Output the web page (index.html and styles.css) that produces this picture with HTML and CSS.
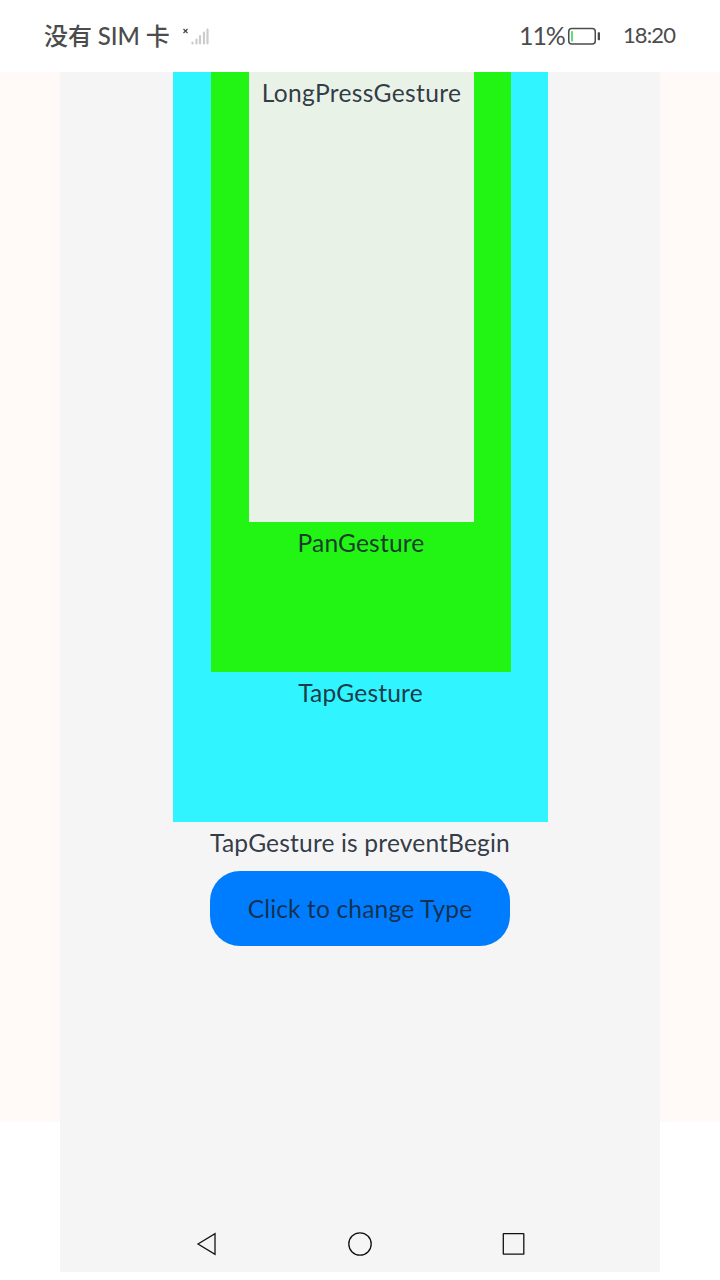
FILE: index.html
```html
<!DOCTYPE html>
<html lang="zh-CN">
<head>
<meta charset="utf-8">
<title>Gesture</title>
<link rel="stylesheet" href="styles.css">
</head>
<body>
<header class="status">
  <span class="sim">没有 SIM 卡</span>
  <svg class="signal" width="28" height="20" viewBox="0 0 28 20"><path d="M1.500 3l4 4M5.500 3l-4 4" stroke="#444" stroke-width="1.200"/><path d="M10.500 17.500v-1M14.500 17.500v-4M18 17.500v-7.500M22 17.500v-11M25.500 17.500v-14" stroke="#ccc" stroke-width="2.200" stroke-linecap="round"/></svg>
  <span class="percent">11%</span>
  <svg class="battery" width="33" height="18" viewBox="0 0 33 18"><rect x=".75" y="1.500" width="26.500" height="15.500" rx="3" fill="none" stroke="#4c4c4c" stroke-width="1.500"/><rect x="3" y="4" width="2" height="10.500" rx=".5" fill="#64dc78"/><rect x="29.700" y="5.200" width="2.300" height="8" rx=".6" fill="#4c4c4c"/></svg>
  <time class="time">18:20</time>
</header>
<div class="screen">
  <main class="page">
    <section class="tap">
      <section class="pan">
        <section class="press"><p class="label w-press">LongPressGesture</p></section>
        <p class="label">PanGesture</p>
      </section>
      <p class="label">TapGesture</p>
    </section>
    <p class="label">TapGesture is preventBegin</p>
    <button class="change">Click to change Type</button>
    <nav class="nav">
      <svg width="26" height="26" viewBox="0 0 26 26"><path d="M4 13L21 2.700v20.600z"/></svg>
      <svg width="26" height="26" viewBox="0 0 26 26"><circle cx="13" cy="13" r="11.200"/></svg>
      <svg width="26" height="26" viewBox="0 0 26 26"><rect x="2.300" y="2.700" width="20.500" height="20.500" rx=".3"/></svg>
    </nav>
  </main>
</div>
</body>
</html>
```
FILE: styles.css
```css
* { box-sizing: border-box; }
body { margin: 0; height: 1280px; background: #fff; overflow: hidden; font-family: Lato, "Noto Sans CJK SC", sans-serif; color: rgba(24, 36, 49, .9); }
.status { height: 72px; display: flex; align-items: center; padding: 0 44px; color: #4c4c4c; white-space: nowrap; }
.sim { font-size: 24px; font-weight: 500; width: 138px; letter-spacing: -.1px; padding-bottom: 4px; }
.percent { margin-left: auto; width: 49px; font-size: 25px; letter-spacing: -1.1px; padding-bottom: 3px; }
.battery { margin: 0 22px 0 0; }
.time { width: 54px; font-size: 22px; letter-spacing: -.9px; padding-bottom: 4px; margin-right: -1px; }
.screen { height: 1200px; padding: 0 60px; background: linear-gradient(#fffaf8 1050px, #fff 1050px); }
.page { height: 1200px; background: #f5f5f5; display: flex; flex-direction: column; align-items: center; }
.tap { width: 375px; height: 750px; margin-left: 1px; background: #30f4ff; display: flex; flex-direction: column; align-items: center; }
.pan { width: 300px; height: 600px; margin-left: 1px; background: #22f513; display: flex; flex-direction: column; align-items: center; }
.press { width: 225px; height: 450px; margin-left: 1px; background: #e8f2e6; display: flex; flex-direction: column; align-items: center; }
.label { margin: 7px 0 0; height: 28px; line-height: 28px; font-size: 24.6px; letter-spacing: .15px; white-space: nowrap; }
.w-press { letter-spacing: .33px; }
.change { flex: none; margin-top: 14px; width: 300px; height: 75px; padding: 0; border: 0; border-radius: 30px; background: #007dff; color: rgba(24, 36, 49, .85); font: 24.6px Lato, sans-serif; letter-spacing: .13px; }
.nav { margin-top: auto; padding-bottom: 15px; width: 333px; display: flex; justify-content: space-between; }
.nav svg { fill: none; stroke: #111; stroke-width: 1.300; }
```
